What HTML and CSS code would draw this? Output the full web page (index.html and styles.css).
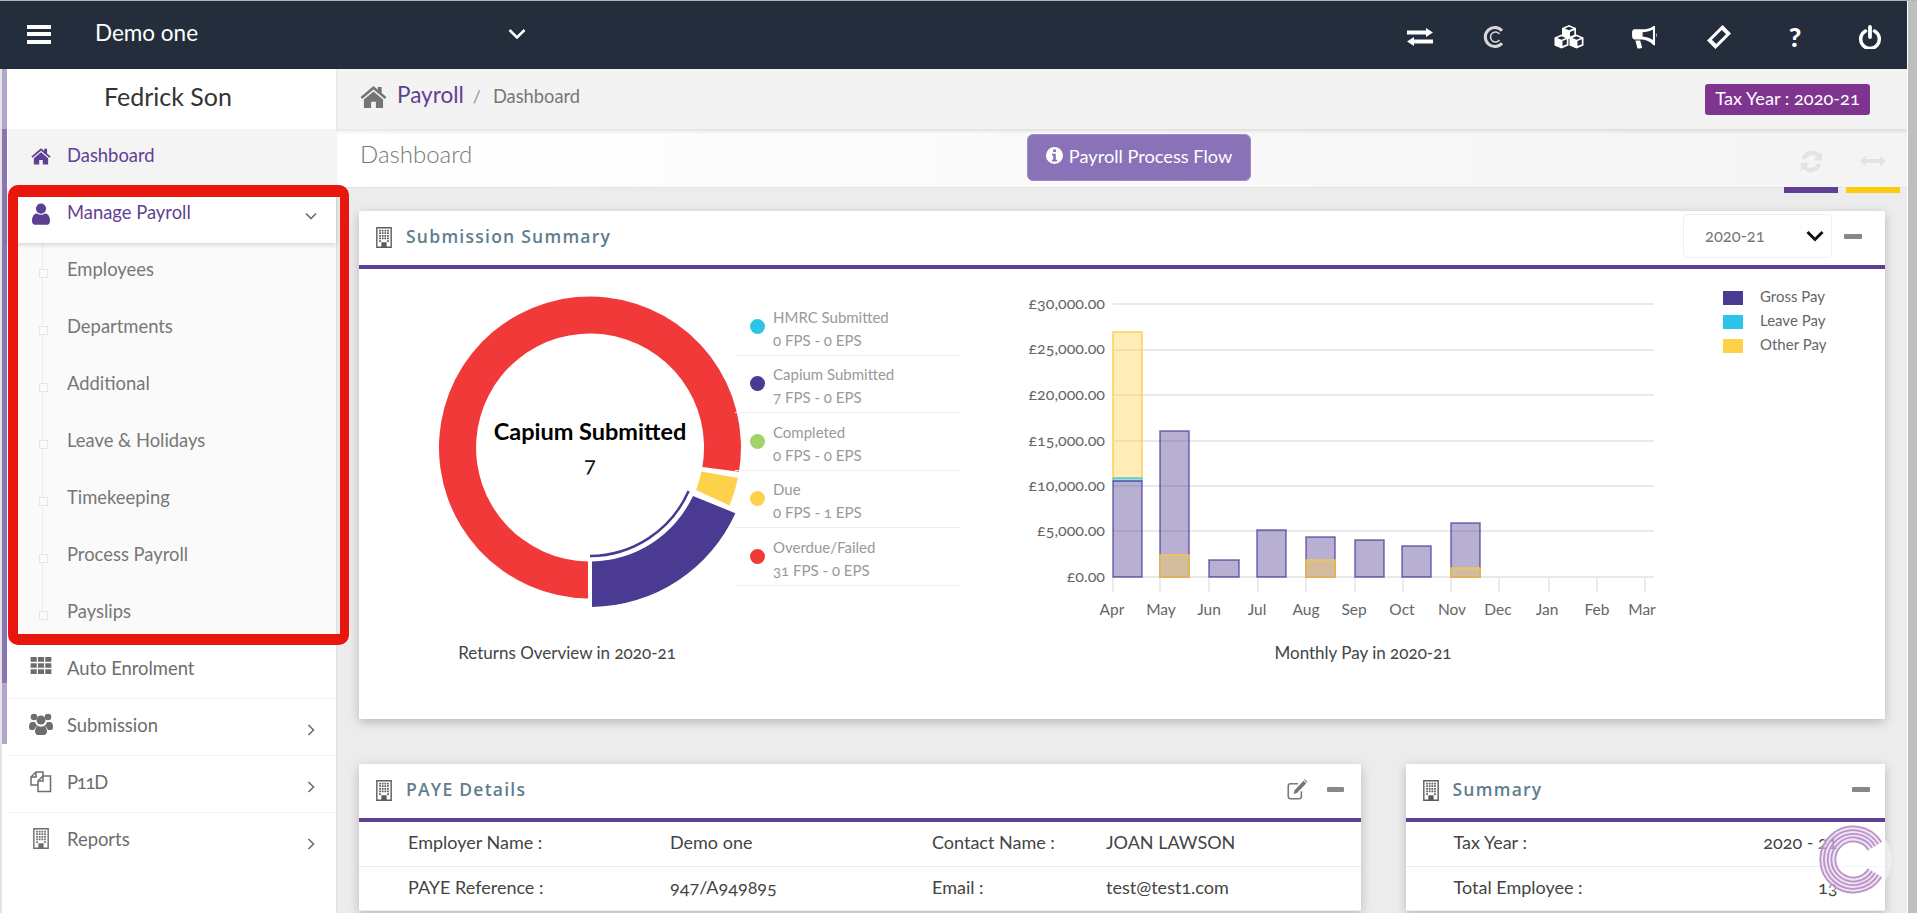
FILE: index.html
```html
<!DOCTYPE html>
<html lang="en">
<head>
<meta charset="utf-8">
<title>Payroll Dashboard</title>
<link rel="stylesheet" href="styles.css">
</head>
<body>
<svg class="defs" width="0" height="0" aria-hidden="true">
  <symbol id="i-home" viewBox="0 0 28 24"><path d="M14 1 0.5 12.600l1.700 2L14 4.600l11.800 10 1.700-2L22.500 8.400V2h-4v3z"/><path d="M14 6.800 4 15.200V24h7.500v-6.500h5V24H24v-8.800z"/></symbol>
  <symbol id="i-user" viewBox="0 0 20 24"><circle cx="10" cy="6" r="5.600"/><path d="M0 20c0-6 2.600-8.600 5.600-8.600 1.400 1 2.800 1.500 4.400 1.500s3-.5 4.400-1.500c3 0 5.600 2.600 5.600 8.600 0 2.700-1.800 4-4 4H4c-2.200 0-4-1.300-4-4z"/></symbol>
  <symbol id="i-grid" viewBox="0 0 22 18"><path d="M0 0h6.500v5H0zM7.750 0h6.500v5h-6.500zM15.500 0H22v5h-6.500zM0 6.500h6.500v5H0zM7.750 6.500h6.500v5h-6.500zM15.500 6.500H22v5h-6.500zM0 13h6.500v5H0zM7.750 13h6.500v5h-6.500zM15.500 13H22v5h-6.500z"/></symbol>
  <symbol id="i-users" viewBox="0 0 24 22"><circle cx="5" cy="4" r="3.300"/><circle cx="19" cy="4" r="3.300"/><circle cx="12" cy="7" r="4.500"/><path d="M0 14c0-3 1-5 3-5h3c.5 2 1.500 3 3 4-2.500 1-3.500 2.500-4 4H2c-1.200 0-2-1-2-3zM24 14c0-3-1-5-3-5h-3c-.5 2-1.500 3-3 4 2.500 1 3.500 2.500 4 4h3c1.200 0 2-1 2-3z"/><path d="M6 18c0-3 2-5 3.500-5 1.500 1 3.500 1 5 0C16 13 18 15 18 18c0 2.500-1.500 4-3 4H9c-1.500 0-3-1.500-3-4z"/></symbol>
  <symbol id="i-files" viewBox="0 0 22 22"><g fill="none" stroke="currentColor" stroke-width="1.500"><path d="M8 14H1V6L6 1H13V5"/><path d="M1 6H6V1"/><path d="M8 10L13 5H20.500V20.500H8Z"/><path d="M8 10H13V5"/></g></symbol>
  <symbol id="i-building" viewBox="0 0 18 24"><path fill="none" stroke="currentColor" stroke-width="1.600" d="M.8.8h16.400v22.400H.8z"/><path d="M3.500 3h2v2h-2zM6.500 3h2v2h-2zM9.500 3h2v2h-2zM12.500 3h2v2h-2zM3.500 6h2v2h-2zM6.500 6h2v2h-2zM9.500 6h2v2h-2zM12.500 6h2v2h-2zM3.500 9h2v2h-2zM6.500 9h2v2h-2zM9.500 9h2v2h-2zM12.500 9h2v2h-2zM3.500 12h2v2h-2zM6.500 12h2v2h-2zM9.500 12h2v2h-2zM12.500 12h2v2h-2zM3.500 15h2v2h-2zM12.500 15h2v2h-2zM6 17.500h6V23H6z"/></symbol>
  <symbol id="i-exchange" viewBox="0 0 26 18"><path d="M0 2.500H19V0L26 4.500 19 9V6.500H0zM26 11.500H7V9L0 13.500 7 18V15.500H26z"/></symbol>
  <symbol id="i-capium" viewBox="0 0 24 24"><g fill="none" stroke="currentColor"><path stroke-width="3" d="M19 5.800A9.500 9.500 0 1 0 19 18.200"/><path stroke-width="1.500" d="M16.500 9A5 5 0 1 0 16.500 15"/></g></symbol>
  <symbol id="i-cubes" viewBox="0 0 30 24"><g fill="#fff"><path d="M15 0l7 3v8l-7 3-7-3V3z"/><path d="M7.500 9.500l7 3v8l-7 3-7-3v-8z"/><path d="M22.500 9.500l7 3v8l-7 3-7-3v-8z"/></g><g fill="#232d3b"><path d="M15 1.800l4.200 1.700L15 5.200l-4.200-1.700z"/><path d="M7.500 11.300l4.200 1.700-4.200 1.700L3.300 13z"/><path d="M22.500 11.300l4.200 1.700-4.200 1.700-4.200-1.700z"/><path d="M8.500 16l4.300-1.800v5L8.500 21zM23.500 16l4.300-1.800v5L23.500 21zM16 7l4.300-1.800v4.600L16 11.500z"/></g></symbol>
  <symbol id="i-horn" viewBox="0 0 26 24"><path fill-rule="evenodd" d="M24 0v20h-1.500C19 16 14.500 14 9 14H2.500C1 14 0 12.500 0 10.500V7c0-2 1-3.500 2.500-3.500H9C14.500 3.500 19 3 22.500 0zM21.800 3.600C18.500 5.500 14.500 6.400 11 6.600V11c3.500.4 7.500 1.500 10.800 3.500z"/><path d="M25 7.500c1 .4 1 3.600 0 4zM3.500 15h5l2 7.500c-.4 1-4.500 1.500-5 .5z"/></symbol>
  <symbol id="i-ticket" viewBox="0 0 24 24"><g transform="rotate(-45 12 12)"><path fill-rule="evenodd" d="M1 6h22v12H1zM5 9v6h14V9z"/></g></symbol>
  <symbol id="i-power" viewBox="0 0 24 24"><path fill="none" stroke="currentColor" stroke-width="3.500" stroke-linecap="round" d="M7.500 6a9.300 9.300 0 1 0 9 0"/><path fill="none" stroke="currentColor" stroke-width="3.800" stroke-linecap="round" d="M12 2v10"/></symbol>
  <symbol id="i-refresh" viewBox="0 0 24 24"><path d="M3.500 10C4.500 5.500 8 2.500 12.500 2.500c2.800 0 5 1.200 6.600 2.800L21.500 3v8h-8l3-3c-1-1.200-2.400-1.800-4-1.800-2.600 0-4.600 1.500-5.200 3.800zM20.500 14c-1 4.500-4.500 7.500-9 7.500-2.800 0-5-1.200-6.600-2.800L2.500 21v-8h8l-3 3c1 1.200 2.400 1.800 4 1.800 2.600 0 4.600-1.500 5.200-3.800z"/></symbol>
  <symbol id="i-arrows" viewBox="0 0 26 12"><path d="M0 6l6-5.500V4h14V.5L26 6l-6 5.500V8H6v3.500z"/></symbol>
  <symbol id="i-edit" viewBox="0 0 24 24"><path fill="none" stroke="currentColor" stroke-width="1.800" d="M17 14v6c0 1.500-1 2.500-2.500 2.500h-10C3 22.500 2 21.500 2 20V8c0-1.500 1-2.500 2.500-2.500H13"/><path d="M19.500 2l3 3L12 16l-4 1 1-4zM20 .8l1-.6 3 3-.6 1z"/></symbol>
  <symbol id="i-info" viewBox="0 0 20 20"><path fill-rule="evenodd" d="M10 0a10 10 0 1 1 0 20 10 10 0 0 1 0-20zM8.300 2.800v3h3.400v-3zM7 8v2h1.500v5H7v2h6v-2h-1.500V8z"/></symbol>
</svg>

<div class="page">
  <div class="frame">
    <header class="topbar">
      <div class="burger"><span></span><span></span><span></span></div>
      <div class="company">Demo one</div>
      <svg class="company-chev" viewBox="0 0 18 10"><path d="M1.500 1 9 8.500 16.500 1"/></svg>
      <nav class="top-icons">
        <svg class="ti ti-ex"><use href="#i-exchange"/></svg>
        <svg class="ti ti-cap"><use href="#i-capium"/></svg>
        <svg class="ti ti-cubes"><use href="#i-cubes"/></svg>
        <svg class="ti ti-horn"><use href="#i-horn"/></svg>
        <svg class="ti ti-ticket"><use href="#i-ticket"/></svg>
        <span class="ti ti-q">?</span>
        <svg class="ti ti-power"><use href="#i-power"/></svg>
      </nav>
    </header>

    <div class="body-row">
      <aside class="sidebar">
        <div class="side-scroll"></div>
        <div class="side-inner">
          <div class="side-user">Fedrick Son</div>
          <ul class="menu">
            <li class="item item-dash"><svg class="m-ic ic-home"><use href="#i-home"/></svg><span>Dashboard</span></li>
            <li class="item item-open"><svg class="m-ic ic-user"><use href="#i-user"/></svg><span>Manage Payroll</span>
              <svg class="m-chev chev-down" viewBox="0 0 12 8"><path d="M1 1.500 6 6.500 11 1.500"/></svg></li>
            <li class="sub">
              <ul class="sub-list">
                <li>Employees</li>
                <li>Departments</li>
                <li>Additional</li>
                <li>Leave &amp; Holidays</li>
                <li>Timekeeping</li>
                <li>Process Payroll</li>
                <li>Payslips</li>
              </ul>
            </li>
            <li class="item"><svg class="m-ic ic-grid"><use href="#i-grid"/></svg><span>Auto Enrolment</span></li>
            <li class="item"><svg class="m-ic ic-users"><use href="#i-users"/></svg><span>Submission</span>
              <svg class="m-chev chev-right" viewBox="0 0 8 12"><path d="M1.500 1 6.500 6 1.500 11"/></svg></li>
            <li class="item"><svg class="m-ic ic-files"><use href="#i-files"/></svg><span class="tight">P11D</span>
              <svg class="m-chev chev-right" viewBox="0 0 8 12"><path d="M1.500 1 6.500 6 1.500 11"/></svg></li>
            <li class="item item-last"><svg class="m-ic ic-bld"><use href="#i-building"/></svg><span>Reports</span>
              <svg class="m-chev chev-right" viewBox="0 0 8 12"><path d="M1.500 1 6.500 6 1.500 11"/></svg></li>
          </ul>
        </div>
        <div class="annotation"></div>
      </aside>

      <main class="main">
        <div class="crumbs">
          <svg class="crumb-home"><use href="#i-home"/></svg>
          <a class="crumb-link">Payroll</a>
          <span class="crumb-sep">/</span>
          <span class="crumb-cur">Dashboard</span>
          <span class="tax-badge">Tax Year : 2020-21</span>
        </div>

        <div class="subhead">
          <h1 class="page-title">Dashboard</h1>
          <button class="flow-btn"><svg class="flow-ic"><use href="#i-info"/></svg>Payroll Process Flow</button>
          <div class="tools">
            <div class="tool tool-purple"><svg class="tool-ic ic-refresh"><use href="#i-refresh"/></svg></div>
            <div class="tool tool-yellow"><svg class="tool-ic ic-arrows"><use href="#i-arrows"/></svg></div>
          </div>
        </div>

        <div class="content">
          <section class="card card-full">
            <div class="card-head">
              <svg class="card-ic"><use href="#i-building"/></svg>
              <h2 class="card-title">Submission Summary</h2>
              <div class="year-select"><span>2020-21</span><svg class="year-chev" viewBox="0 0 18 12"><path d="M1.500 2 9 9.500 16.500 2"/></svg></div>
              <span class="minus"></span>
            </div>
            <div class="summary-body">
              <svg class="donut" viewBox="430 290 305 380">
                <path class="seg-red" d="M588 598.490A151 151 0 1 1 739 471.800L702.400 466.900A114 114 0 1 0 588 561.480Z"/>
                <path class="seg-purple" d="M592 606.990A159.500 159.500 0 0 0 735.400 513.200L693 496A114 114 0 0 1 592 561.480Z"/>
                <path class="seg-yellow" d="M738 478A151 151 0 0 1 729.500 505.400L696 490A114 114 0 0 0 701.400 471.600Z"/>
                <path class="seg-thin" d="M590 556A108.500 108.500 0 0 0 688.600 491"/>
                <text class="donut-title" x="590" y="440" text-anchor="middle">Capium Submitted</text>
                <text class="donut-value" x="590" y="472" text-anchor="middle">7</text>
                <text class="caption" x="567" y="659" text-anchor="middle">Returns Overview in 2020-21</text>
              </svg>
              <ul class="legend">
                <li><i class="dot dot-cyan"></i><div>HMRC Submitted<br>0 FPS - 0 EPS</div></li>
                <li><i class="dot dot-indigo"></i><div>Capium Submitted<br>7 FPS - 0 EPS</div></li>
                <li><i class="dot dot-green"></i><div>Completed<br>0 FPS - 0 EPS</div></li>
                <li><i class="dot dot-yellow"></i><div>Due<br>0 FPS - 1 EPS</div></li>
                <li><i class="dot dot-red"></i><div>Overdue/Failed<br>31 FPS - 0 EPS</div></li>
              </ul>
              <svg class="bars" viewBox="1020 290 680 380">
                <g class="grid">
                  <path d="M1113 304H1654M1113 350H1654M1113 395H1654M1113 441H1654M1113 486H1654M1113 531H1654M1113 577H1654"/>
                  <path d="M1113 577V592M1160 577V592M1209 577V592M1258 577V592M1306 577V592M1355 577V592M1403 577V592M1451 577V592M1499 577V592M1549 577V592M1597 577V592M1645 577V592"/>
                </g>
                <g class="y-labels" text-anchor="end">
                  <text x="1105" y="309">£30,000.00</text>
                  <text x="1105" y="354">£25,000.00</text>
                  <text x="1105" y="400">£20,000.00</text>
                  <text x="1105" y="446">£15,000.00</text>
                  <text x="1105" y="491">£10,000.00</text>
                  <text x="1105" y="536">£5,000.00</text>
                  <text x="1105" y="582">£0.00</text>
                </g>
                <g class="x-labels" text-anchor="middle">
                  <text x="1112" y="615">Apr</text>
                  <text x="1161" y="615">May</text>
                  <text x="1209" y="615">Jun</text>
                  <text x="1257" y="615">Jul</text>
                  <text x="1306" y="615">Aug</text>
                  <text x="1354" y="615">Sep</text>
                  <text x="1402" y="615">Oct</text>
                  <text x="1452" y="615">Nov</text>
                  <text x="1498" y="615">Dec</text>
                  <text x="1547" y="615">Jan</text>
                  <text x="1597" y="615">Feb</text>
                  <text x="1642" y="615">Mar</text>
                </g>
                <rect class="b-other" x="1113" y="332" width="29" height="146"/>
                <rect class="b-leave" x="1113" y="478" width="29" height="3"/>
                <rect class="b-gross" x="1113" y="481" width="29" height="96"/>
                <rect class="b-gross" x="1160" y="431" width="29" height="146"/>
                <rect class="b-other" x="1160" y="555" width="29" height="22"/>
                <rect class="b-gross" x="1209" y="560" width="30" height="17"/>
                <rect class="b-gross" x="1257" y="530" width="29" height="47"/>
                <rect class="b-gross" x="1306" y="537" width="29" height="40"/>
                <rect class="b-other" x="1306" y="560" width="29" height="17"/>
                <rect class="b-gross" x="1355" y="540" width="29" height="37"/>
                <rect class="b-gross" x="1402" y="546" width="29" height="31"/>
                <rect class="b-gross" x="1451" y="523" width="29" height="54"/>
                <rect class="b-other" x="1451" y="568" width="29" height="9"/>
                <text class="caption" x="1363" y="659" text-anchor="middle">Monthly Pay in 2020-21</text>
              </svg>
              <ul class="pay-legend">
                <li><i class="sw sw-gross"></i>Gross Pay</li>
                <li><i class="sw sw-leave"></i>Leave Pay</li>
                <li><i class="sw sw-other"></i>Other Pay</li>
              </ul>
            </div>
          </section>

          <div class="lower">
            <section class="card card-paye">
              <div class="card-head">
                <svg class="card-ic"><use href="#i-building"/></svg>
                <h2 class="card-title">PAYE Details</h2>
                <svg class="edit-ic"><use href="#i-edit"/></svg>
                <span class="minus"></span>
              </div>
              <div class="paye-row"><span>Employer Name :</span><span>Demo one</span><span>Contact Name :</span><span>JOAN LAWSON</span></div>
              <div class="paye-row"><span>PAYE Reference :</span><span>947/A949895</span><span>Email :</span><span>test@test1.com</span></div>
            </section>
            <section class="card card-sum">
              <div class="card-head">
                <svg class="card-ic"><use href="#i-building"/></svg>
                <h2 class="card-title">Summary</h2>
                <span class="minus minus-end"></span>
              </div>
              <div class="sum-row"><span>Tax Year :</span><span>2020 - 21</span></div>
              <div class="sum-row"><span>Total Employee :</span><span>13</span></div>
            </section>
          </div>
        </div>
      </main>
    </div>
  </div>
  <div class="page-scroll"></div>
</div>

<svg class="chat-logo" viewBox="0 0 75 74">
  <circle cx="37.500" cy="37" r="37" class="logo-bg"/>
  <path class="logo-band" d="M58 23.500A25.500 25.500 0 1 0 58 49.500"/>
  <g class="logo-arcs">
    <path d="M64.300 19A33 33 0 1 0 64.300 54"/>
    <path d="M61.100 21A29.300 29.300 0 1 0 61.100 52"/>
    <path d="M58 22.900A25.600 25.600 0 1 0 58 50.100"/>
    <path d="M55 24.800A22 22 0 1 0 55 48.200"/>
    <path d="M51.600 27A18 18 0 1 0 51.600 46"/>
  </g>
</svg>
</body>
</html>
```
FILE: styles.css
```css
* { box-sizing: border-box; }
html, body { margin: 0; padding: 0; height: 100%; overflow: hidden; }
body { font-family: "Lato", "Open Sans", sans-serif; color: #444; background: #ececec; font-size: 16px; font-feature-settings: "onum" 1; }
ul { list-style: none; margin: 0; padding: 0; }
.defs { position: absolute; }

.page { display: flex; height: 913px; width: 1917px; border-top: 1px solid #b5b5b5; }
.frame { width: 1908px; display: flex; flex-direction: column; height: 912px; border-right: 1px solid #fff; }
.page-scroll { width: 9px; background: #bfbfbf; }

/* top bar */
.topbar { height: 68px; background: #232d3b; display: flex; align-items: center; color: #fff; flex: none; }
.burger { width: 24px; margin-left: 27px; display: flex; flex-direction: column; gap: 3.500px; margin-top: -2px; }
.burger span { display: block; height: 4px; background: #fff; }
.company { margin-left: 44px; font-size: 22.500px; width: 413px; margin-top: -6px; }
.company-chev { width: 18px; height: 10px; fill: none; stroke: #fff; stroke-width: 2.500; margin-top: -2px; }
.top-icons { display: grid; grid-template-columns: repeat(7, 75.200px); justify-items: center; align-items: center; width: 526.400px; margin-left: auto; margin-top: 4px; color: #fff; }
.ti { fill: #fff; color: #fff; display: block; }
.ti-ex { width: 26px; height: 18px; transform: translateX(2px); }
.ti-cap { width: 24px; height: 24px; color: #d8d8d8; transform: translateX(2px); }
.ti-cubes { width: 30px; height: 24px; }
.ti-horn { width: 25px; height: 23px; transform: translateX(1px); }
.ti-ticket { width: 24px; height: 24px; }
.ti-q { font-size: 27px; font-weight: 900; line-height: 24px; transform: translateX(1px); }
.ti-power { width: 24px; height: 24px; transform: translateX(1px); }

.body-row { display: flex; flex: 1; min-height: 0; }

/* sidebar */
.sidebar { width: 336px; flex: none; display: flex; position: relative; background: #fff; z-index: 2; box-shadow: 1px 0 2px rgba(0,0,0,.06); }
.side-scroll { width: 8px; flex: none; border-left: 2px solid #e4e4e4; border-right: 1px solid #fff;
  background: linear-gradient(#b3a6cb 0, #b3a6cb 60px, #8a74b3 60px, #8a74b3 614px, #b3a6cb 614px, #b3a6cb 675px, #fff 675px); }
.side-inner { flex: 1; min-width: 0; }
.side-user { height: 60px; display: flex; align-items: center; justify-content: center; font-size: 25px; color: #333; padding: 0 8px 6px 0; }
.item { height: 57px; display: flex; align-items: center; border-bottom: 1px solid #f2f2f2; color: #6d6d6d; font-size: 18.400px; padding-left: 59px; position: relative; }
.item-last { border-bottom: 0; }
.item span { margin-top: -5px; }
.item span.tight { letter-spacing: -1.200px; }
.item-dash { background: #f4f4f4; color: #5f3f94; border-bottom: 0; }
.item-open { color: #5f3f94; background: #fff; box-shadow: 0 2px 5px rgba(0,0,0,.15); z-index: 1; border-bottom: 0; }
.m-ic { position: absolute; left: 22px; top: 14px; width: 22px; height: 24px; fill: #6d6d6d; color: #6d6d6d; }
.item-dash .m-ic, .item-open .m-ic { fill: #5f3f94; color: #5f3f94; }
.ic-home { width: 20px; height: 18px; left: 23px; top: 18px; }
.ic-user { width: 18px; height: 22px; left: 24px; top: 17px; }
.ic-grid { width: 22px; height: 17px; top: 15px; }
.ic-users { width: 24px; height: 22px; left: 21px; top: 14px; }
.ic-files { width: 22px; height: 22px; top: 15px; }
.ic-bld { width: 18px; height: 21px; left: 24px; top: 15px; }
.m-chev { position: absolute; fill: none; stroke: #6d6d6d; stroke-width: 1.600; }
.chev-down { width: 12px; height: 8px; left: 297px; top: 26px; }
.chev-right { width: 8px; height: 12px; left: 299px; top: 25px; }
.sub { background: #fafafa; }
.sub-list { position: relative; }
.sub-list::before { content: ""; position: absolute; left: 34px; top: 0; height: 368px; width: 1px; background: #ececec; }
.sub-list li { height: 57px; display: flex; align-items: center; padding: 0 0 6px 59px; font-size: 18.400px; color: #777; position: relative; }
.sub-list li::before { content: ""; position: absolute; left: 31px; top: 26px; width: 7px; height: 7px; background: #fafafa; border: 1px solid #e6e6e6; }
.annotation { position: absolute; left: 8px; top: 116px; width: 341px; height: 460px; border: solid #e8170d; border-width: 12px 9px 11px 10px; border-radius: 10px; z-index: 5; }

/* main */
.main { flex: 1; min-width: 0; display: flex; flex-direction: column; background: #ececec; overflow: hidden; }
.crumbs { height: 60px; flex: none; background: #f3f3f3; display: flex; align-items: center; box-shadow: 0 2px 4px rgba(0,0,0,.12); position: relative; z-index: 1; padding-left: 24px; padding-right: 37px; }
.crumb-home { width: 27px; height: 23px; fill: #757575; margin-right: 10px; margin-top: -6px; }
.crumb-link { font-size: 22.500px; color: #5f3f94; margin-top: -9px; }
.crumb-sep { font-size: 18px; color: #999; margin: -6px 12px 0 9px; }
.crumb-cur { font-size: 18.300px; color: #777; margin-top: -6px; }
.tax-badge { margin-left: auto; background: #7f3590; color: #fff; font-size: 18.200px; height: 31px; width: 165px; border-radius: 3px; display: flex; align-items: center; justify-content: center; margin-top: 1px; padding-bottom: 4px; }
.subhead { height: 59px; flex: none; background: linear-gradient(90deg, #fff, #f4f4f4); border-bottom: 1px solid #e4e4e4; display: flex; position: relative; padding-left: 24px; }
.page-title { margin: 0; font-size: 24px; font-weight: 300; color: #777; width: 667px; padding-top: 8px; line-height: 34px; }
.flow-btn { width: 224px; height: 47px; margin-top: 5px; background: #8a72b8; border: 1px solid #a08dc6; border-radius: 6px; color: #fff; font: inherit; font-size: 18.200px; display: flex; align-items: center; justify-content: center; gap: 6px; padding: 0 0 4px; font-feature-settings: inherit; }
.flow-ic { width: 17px; height: 17px; fill: #fff; margin-top: 0; }
.tools { margin-left: auto; display: flex; gap: 8px; margin-right: 7px; }
.tool { width: 54px; height: 64px; display: flex; justify-content: center; padding-top: 19px; }
.tool-purple { border-bottom: 6px solid #5f3f94; }
.tool-yellow { border-bottom: 6px solid #fccb0e; }
.tool-ic { fill: #e3e3e3; }
.ic-refresh { width: 27px; height: 27px; }
.ic-arrows { width: 26px; height: 12px; margin-top: 7px; }

.content { flex: 1; padding: 23px 22px 0 23px; min-height: 0; overflow: hidden; }
.card { background: #fff; box-shadow: 0 3px 10px rgba(0,0,0,.22); }
.card-full { height: 508px; }
.card-head { height: 58px; border-bottom: 4px solid #5f3f94; display: flex; align-items: center; padding: 0 23px 0 16px; }
.card-ic { width: 18px; height: 21px; fill: #5c5c5c; color: #5c5c5c; margin-top: -2px; }
.card-title { margin: -4px 0 0 13px; font-size: 17.500px; font-weight: 600; letter-spacing: 1.250px; color: #5f7d8e; font-family: "Open Sans", sans-serif; }
.year-select { margin-left: auto; width: 149px; height: 44px; border: 1px solid #eee; border-radius: 5px; display: flex; align-items: center; justify-content: space-between; padding: 0 7px 0 21px; color: #777; font-size: 16.500px; margin-top: -4px; }
.year-chev { width: 18px; height: 12px; fill: none; stroke: #111; stroke-width: 3; }
.minus { width: 18px; height: 5px; background: #888; border-radius: 1px; margin-left: 12px; margin-top: -4px; flex: none; }
.summary-body { display: flex; height: 450px; padding-left: 71px; padding-top: 21px; align-items: flex-start; }
.donut { width: 305px; height: 380px; overflow: visible; flex: none; }
.seg-red { fill: #f2393a; }
.seg-purple { fill: #4a3a92; }
.seg-yellow { fill: #fed14a; }
.seg-thin { fill: none; stroke: #4a3a92; stroke-width: 2.500; }
.donut-title { font-size: 23.500px; font-weight: 700; fill: #000; }
.donut-value { font-size: 22px; fill: #111; }
.caption { font-size: 17px; fill: #444; }
.legend { width: 225px; flex: none; margin-top: 8px; }
.legend li { height: 57.500px; border-bottom: 1px solid #eee; display: flex; padding-left: 15px; align-items: center; color: #999; font-size: 15px; line-height: 23px; gap: 8px; }
.legend li div { padding-top: 5px; }
.dot { width: 15px; height: 15px; border-radius: 50%; flex: none; margin-top: 0; }
.dot-cyan { background: #2cc4e8; }
.dot-indigo { background: #4a3a92; }
.dot-green { background: #a0d468; }
.dot-yellow { background: #fed14a; }
.dot-red { background: #f2393a; }
.bars { width: 680px; height: 380px; margin-left: 60px; flex: none; overflow: visible; }
.grid path { stroke: #e2e2e2; stroke-width: 1.300; fill: none; }
.y-labels text { font-size: 16px; fill: #666; }
.x-labels text { font-size: 15.500px; fill: #666; }
.b-gross { fill: rgba(74,58,146,.4); stroke: rgba(74,58,146,.75); stroke-width: 1.500; }
.b-other { fill: rgba(254,209,74,.4); stroke: rgba(254,200,60,.85); stroke-width: 1.500; }
.b-leave { fill: rgba(44,196,232,.5); stroke: rgba(44,196,232,.9); stroke-width: 1; }
.pay-legend { margin-left: 23px; margin-top: -6px; font-size: 15px; color: #666; }
.pay-legend li { height: 24px; display: flex; align-items: center; gap: 17px; }
.sw { width: 20px; height: 14px; display: block; margin-top: 3px; }
.sw-gross { background: #4a3a92; }
.sw-leave { background: #2cc4e8; }
.sw-other { background: #fed14a; }

.lower { display: flex; gap: 44.500px; margin-top: 45px; align-items: flex-start; }
.card-paye { width: 1002px; flex: none; }
.card-paye .card-head { padding-right: 17px; }
.card-paye .minus { width: 17px; margin-left: 19px; }
.card-sum { width: 479px; flex: none; }
.card-sum .card-head { padding-right: 15px; }
.edit-ic { margin-left: auto; width: 22px; height: 21px; fill: #777; color: #777; margin-top: -3px; }
.minus-end { margin-left: auto; }
.paye-row { display: grid; grid-template-columns: 262px 262px 174px 1fr; padding: 0 0 3px 49px; height: 44.500px; align-items: center; border-bottom: 1px solid #e8ebf2; font-size: 18px; color: #444; }
.sum-row { display: flex; justify-content: space-between; padding: 0 47px 3px 48px; height: 44.500px; align-items: center; border-bottom: 1px solid #e8ebf2; font-size: 18px; color: #444; }

/* floating logo */
.chat-logo { position: fixed; left: 1817px; top: 823px; width: 75px; height: 74px; z-index: 10; }
.logo-bg { fill: rgba(255,255,255,.45); }
.logo-band { fill: none; stroke: rgba(190,150,205,.25); stroke-width: 17; }
.logo-arcs path { fill: none; stroke: #bb92ca; stroke-width: 1.800; }
```
